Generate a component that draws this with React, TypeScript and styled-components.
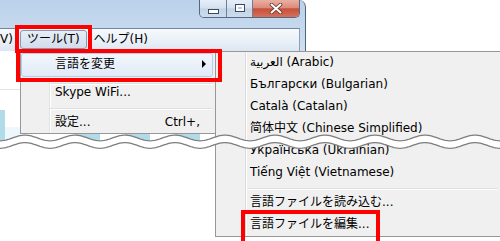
import React from 'react';
import styled, { createGlobalStyle, css } from 'styled-components';

const GlobalStyle = createGlobalStyle`
  html, body { margin: 0; padding: 0; background: #ffffff; }
  body {
    font-family: "DejaVu Sans", "Noto Sans CJK JP", sans-serif;
    font-size: 12px;
    color: #000;
  }
  * { box-sizing: border-box; }
`;

const redMark = (t: number, r: number, b: number, l: number) => css`
  &::after {
    content: '';
    position: absolute;
    top: ${t}px;
    right: ${r}px;
    bottom: ${b}px;
    left: ${l}px;
    border: 4px solid #ff0000;
    pointer-events: none;
    z-index: 5;
  }
`;

const Stage = styled.div`
  position: relative;
  width: 500px;
  height: 241px;
  overflow: hidden;
  background: #fff;
  display: flex;
  flex-direction: column;
`;

const TopRow = styled.div`
  display: flex;
  height: 51px;
  flex: none;
`;

const WindowFrame = styled.div`
  width: 306px;
  display: flex;
  flex-direction: column;
  padding-right: 5px;
  border-right: 1px solid #52647a;
  border-top-right-radius: 7px;
  background: linear-gradient(180deg, #bad2ea 0%, #c6d9ee 60%, #cfdff1 100%);
`;

const TitleBar = styled.div`
  height: 28px;
  display: flex;
  justify-content: flex-end;
  align-items: flex-start;
`;

const CaptionGroup = styled.div`
  display: flex;
  height: 18px;
  border: 1px solid #56687e;
  border-top: none;
  border-radius: 0 0 5px 5px;
  overflow: hidden;
`;

const CaptionButton = styled.div<{ $w: number; $close?: boolean }>`
  width: ${p => p.$w}px;
  height: 100%;
  display: flex;
  justify-content: center;
  align-items: flex-start;
  padding-top: ${p => (p.$close ? 3 : 4)}px;
  background: ${p =>
    p.$close
      ? 'linear-gradient(180deg, #eab0a3 0%, #dc8b7a 45%, #c8503a 52%, #d4715d 100%)'
      : 'linear-gradient(180deg, #e6eef8 0%, #d6e2f0 45%, #c3d3e7 52%, #cddbec 100%)'};
  & + & {
    border-left: 1px solid #6d7f94;
  }
`;

const MinGlyph = styled.div`
  margin-top: 5px;
  width: 11px;
  height: 5px;
  border: 1px solid #3b4a5e;
  background: #fff;
`;

const MaxGlyph = styled.div`
  width: 10px;
  height: 8px;
  border: 1px solid #3b4a5e;
  background: #b9cbe0;
  box-shadow: inset 0 0 0 2px #fff;
`;

const MenuBar = styled.div`
  height: 23px;
  display: flex;
  align-items: flex-start;
  padding-top: 1px;
  border-top: 1px solid #73879c;
  border-right: 1px solid #8ea0b4;
  background: linear-gradient(180deg, #f6f9fc 0%, #ebf1f8 50%, #dce6f2 100%);
`;

const MenuBarItem = styled.div<{ $active?: boolean; $cut?: boolean }>`
  position: relative;
  height: 19px;
  padding: 0 6px;
  border: 1px solid ${p => (p.$active ? '#8799ae' : 'transparent')};
  border-radius: 3px;
  line-height: 17px;
  margin-left: ${p => (p.$cut ? '-7px' : '0')};
  background: ${p => (p.$active ? 'linear-gradient(180deg, #e6edf6 0%, #d2ddec 100%)' : 'transparent')};
  white-space: nowrap;
  ${p => p.$active && redMark(-6, -6, -5, -6)}
`;

const Body = styled.div`
  flex: 1;
  display: flex;
  align-items: flex-start;
`;

const ContentCol = styled.div`
  width: 215px;
  flex: none;
  display: flex;
  flex-direction: column;
`;

const MenuArea = styled.div`
  display: flex;
  align-items: stretch;
`;

const LeftStrip = styled.div`
  width: 20px;
  flex: none;
  background:
    linear-gradient(#e4e4e4, #e4e4e4) 0 38px / 20px 1px no-repeat,
    linear-gradient(#b2dbea, #b2dbea) 0 59px / 5px 30px no-repeat,
    linear-gradient(#eef7fb, #eef7fb) 5px 76px / 15px 10px no-repeat,
    #ffffff;
`;

const MainMenu = styled.div`
  width: 195px;
  margin-top: 1px;
  display: flex;
  flex-direction: column;
  border: 1px solid #979797;
  border-right: none;
  background: linear-gradient(90deg, #f0f0f0 0 28px, #e2e3e3 28px 29px, #ffffff 29px 30px, #f0f0f0 30px);
`;

const MenuRow = styled.div<{ $h: number; $hot?: boolean }>`
  position: relative;
  height: ${p => p.$h}px;
  line-height: ${p => (p.$hot ? 20 : p.$h)}px;
  display: flex;
  justify-content: space-between;
  align-items: flex-start;
  padding-left: ${p => (p.$hot ? 33 : 34)}px;
  padding-right: ${p => (p.$hot ? 6 : 13)}px;
  margin-right: 2px;
  white-space: nowrap;
  ${p =>
    p.$hot &&
    css`
      border: 1px solid #b4cdeb;
      border-radius: 3px;
      background: linear-gradient(180deg, #f2f7fd 0%, #e1eaf7 100%);
      ${redMark(-5, -10, -6, -6)}
    `}
`;

const SubArrow = styled.span`
  margin-top: 6px;
  width: 0;
  height: 0;
  border-top: 4px solid transparent;
  border-bottom: 4px solid transparent;
  border-left: 4px solid #000;
`;

const Separator = styled.div<{ $top: number; $left: number; $h: number }>`
  height: ${p => p.$h}px;
  padding-top: ${p => p.$top}px;
  margin-left: ${p => p.$left}px;
  margin-right: 2px;
  &::before {
    content: '';
    display: block;
    height: 1px;
    background: #e0e0e0;
    box-shadow: 0 1px 0 #ffffff;
  }
`;

const Shortcut = styled.span`
  margin-left: auto;
`;

const BlueStrip = styled.div`
  height: 7px;
  background: linear-gradient(
    90deg,
    #b2dbea 0 5px,
    #eef7fb 5px 20px,
    #ffffff 20px 75px,
    #b2dbea 75px 100px,
    #ffffff 100px 125px,
    #b2dbea 125px 150px,
    #ffffff 150px 175px,
    #b2dbea 175px 200px,
    #ffffff 200px
  );
`;

const SubMenu = styled.div`
  flex: 1;
  display: flex;
  flex-direction: column;
  border: 1px solid #979797;
  border-right: none;
  background: linear-gradient(90deg, #f0f0f0 0 29px, #dcdcdc 29px 30px, #ffffff 30px 31px, #f0f0f0 31px);
`;

const SubItem = styled.div`
  height: 22px;
  line-height: 21px;
  padding-left: 34px;
  white-space: nowrap;
`;

const MarkedText = styled.span`
  position: relative;
  display: inline-block;
  height: 22px;
  ${redMark(-4, -11, -10, -9)}
`;

const WaveLayer = styled.svg`
  position: absolute;
  left: 0;
  top: 128px;
  width: 500px;
  height: 24px;
  z-index: 3;
  pointer-events: none;
`;

const W0 = 128;
const waveY = (x: number, cy: number) => cy - W0 - 2.8 * Math.cos((2 * Math.PI * (x - 25)) / 50);
const wavePoints = (cy: number) => {
  const pts: string[] = [];
  for (let x = -2; x <= 502; x += 2) pts.push(`${x},${waveY(x, cy).toFixed(2)}`);
  return pts;
};

const Wave: React.FC = () => {
  const upper = wavePoints(138);
  const lower = wavePoints(145.5);
  const band = `M${upper.join(' L')} L${lower.slice().reverse().join(' L')} Z`;
  return (
    <WaveLayer viewBox="0 0 500 24">
      <path d={band} fill="#ffffff" />
      <path d={`M${upper.join(' L')}`} fill="none" stroke="#7d7d7d" strokeWidth={1.3} />
      <path d={`M${lower.join(' L')}`} fill="none" stroke="#7d7d7d" strokeWidth={1.3} />
    </WaveLayer>
  );
};

const CloseGlyph: React.FC = () => (
  <svg width="14" height="11" viewBox="0 0 14 11">
    <path d="M2.5 1.5 L11.5 9.5 M11.5 1.5 L2.5 9.5" stroke="#5a3328" strokeWidth={3.6} strokeLinecap="round" />
    <path d="M2.5 1.5 L11.5 9.5 M11.5 1.5 L2.5 9.5" stroke="#ffffff" strokeWidth={2} strokeLinecap="round" />
  </svg>
);

const languages = [
  'العربية (Arabic)',
  'Български (Bulgarian)',
  'Català (Catalan)',
  '简体中文 (Chinese Simplified)',
  'Українська (Ukrainian)',
  'Tiếng Việt (Vietnamese)',
];

export default function App() {
  return (
    <>
      <GlobalStyle />
      <Stage>
        <TopRow>
          <WindowFrame>
            <TitleBar>
              <CaptionGroup>
                <CaptionButton $w={26}>
                  <MinGlyph />
                </CaptionButton>
                <CaptionButton $w={26}>
                  <MaxGlyph />
                </CaptionButton>
                <CaptionButton $w={47} $close>
                  <CloseGlyph />
                </CaptionButton>
              </CaptionGroup>
            </TitleBar>
            <MenuBar>
              <MenuBarItem $cut>V)</MenuBarItem>
              <MenuBarItem $active>ツール(T)</MenuBarItem>
              <MenuBarItem>ヘルプ(H)</MenuBarItem>
            </MenuBar>
          </WindowFrame>
        </TopRow>
        <Body>
          <ContentCol>
            <MenuArea>
              <LeftStrip />
              <MainMenu>
                <MenuRow $h={24} $hot>
                  <span>言語を変更</span>
                  <SubArrow />
                </MenuRow>
                <Separator $h={8} $top={6} $left={29} />
                <MenuRow $h={14}>
                  <span>Skype WiFi...</span>
                </MenuRow>
                <Separator $h={12} $top={9} $left={29} />
                <MenuRow $h={22}>
                  <span>設定...</span>
                  <Shortcut>Ctrl+,</Shortcut>
                </MenuRow>
              </MainMenu>
            </MenuArea>
            <BlueStrip />
          </ContentCol>
          <SubMenu>
            {languages.map(l => (
              <SubItem key={l}>{l}</SubItem>
            ))}
            <Separator $h={8} $top={4} $left={32} />
            <SubItem>言語ファイルを読み込む...</SubItem>
            <SubItem>
              <MarkedText>言語ファイルを編集...</MarkedText>
            </SubItem>
          </SubMenu>
        </Body>
        <Wave />
      </Stage>
    </>
  );
}
